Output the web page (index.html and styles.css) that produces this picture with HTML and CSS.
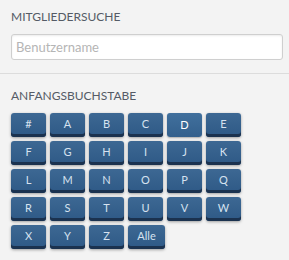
FILE: index.html
```html
<!DOCTYPE html>
<html lang="de">
<head>
    <meta charset="UTF-8">
    <title>Mitgliedersuche</title>
    <link rel="stylesheet" href="styles.css">
</head>
<body>
    <div class="box search">
        <h3>Mitgliedersuche</h3>
        <input class="field" type="text" placeholder="Benutzername">
    </div>
    <div class="box letters">
        <h3>Anfangsbuchstabe</h3>
        <div class="grid">
            <a class="btn">#</a>
            <a class="btn">A</a>
            <a class="btn">B</a>
            <a class="btn">C</a>
            <a class="btn active">D</a>
            <a class="btn">E</a>
            <a class="btn">F</a>
            <a class="btn">G</a>
            <a class="btn">H</a>
            <a class="btn">I</a>
            <a class="btn">J</a>
            <a class="btn">K</a>
            <a class="btn">L</a>
            <a class="btn">M</a>
            <a class="btn">N</a>
            <a class="btn">O</a>
            <a class="btn">P</a>
            <a class="btn">Q</a>
            <a class="btn">R</a>
            <a class="btn">S</a>
            <a class="btn">T</a>
            <a class="btn">U</a>
            <a class="btn">V</a>
            <a class="btn">W</a>
            <a class="btn">X</a>
            <a class="btn">Y</a>
            <a class="btn">Z</a>
            <a class="btn wide">Alle</a>
        </div>
    </div>
</body>
</html>
```

FILE: styles.css
```css
* {
    margin: 0;
    padding: 0;
    box-sizing: border-box;
}

body {
    background-color: #f3f3f3;
    font-family: Lato, "Open Sans", sans-serif;
}

h3 {
    font-size: 12px;
    line-height: 16px;
    font-weight: normal;
    color: #555b66;
    text-transform: uppercase;
}

.search {
    padding: 9px 6px 13px 11px;
    border-bottom: 1px solid #dcdcdc;
}

.field {
    display: block;
    width: 100%;
    height: 26px;
    margin-top: 9px;
    padding: 0 4px;
    font-family: inherit;
    font-size: 13px;
    border: 1px solid #cfcfcf;
    border-radius: 3px;
    background-color: #fff;
    box-shadow: inset 0 1px 2px rgba(0, 0, 0, 0.08);
}

.field::placeholder {
    color: #b5b5b5;
}

.letters {
    padding: 14px 11px;
}

.grid {
    display: flex;
    flex-wrap: wrap;
    gap: 4px;
    width: 236px;
    margin-top: 9px;
}

.btn {
    display: flex;
    align-items: center;
    justify-content: center;
    min-width: 35px;
    height: 24px;
    padding: 0 4px 3px;
    font-size: 11px;
    color: #d6e2f0;
    border-radius: 3px;
    background: linear-gradient(#3d6893, #2e5986);
    box-shadow: inset 0 -3px 0 #1b324f, 0 1px 3px rgba(0, 0, 0, 0.35);
    cursor: pointer;
}

.btn.active {
    padding-bottom: 1px;
    color: #fff;
    background: linear-gradient(#41709d, #33608d);
    box-shadow: 0 1px 2px rgba(0, 0, 0, 0.3);
}

.btn.wide {
    min-width: 37px;
}
```
